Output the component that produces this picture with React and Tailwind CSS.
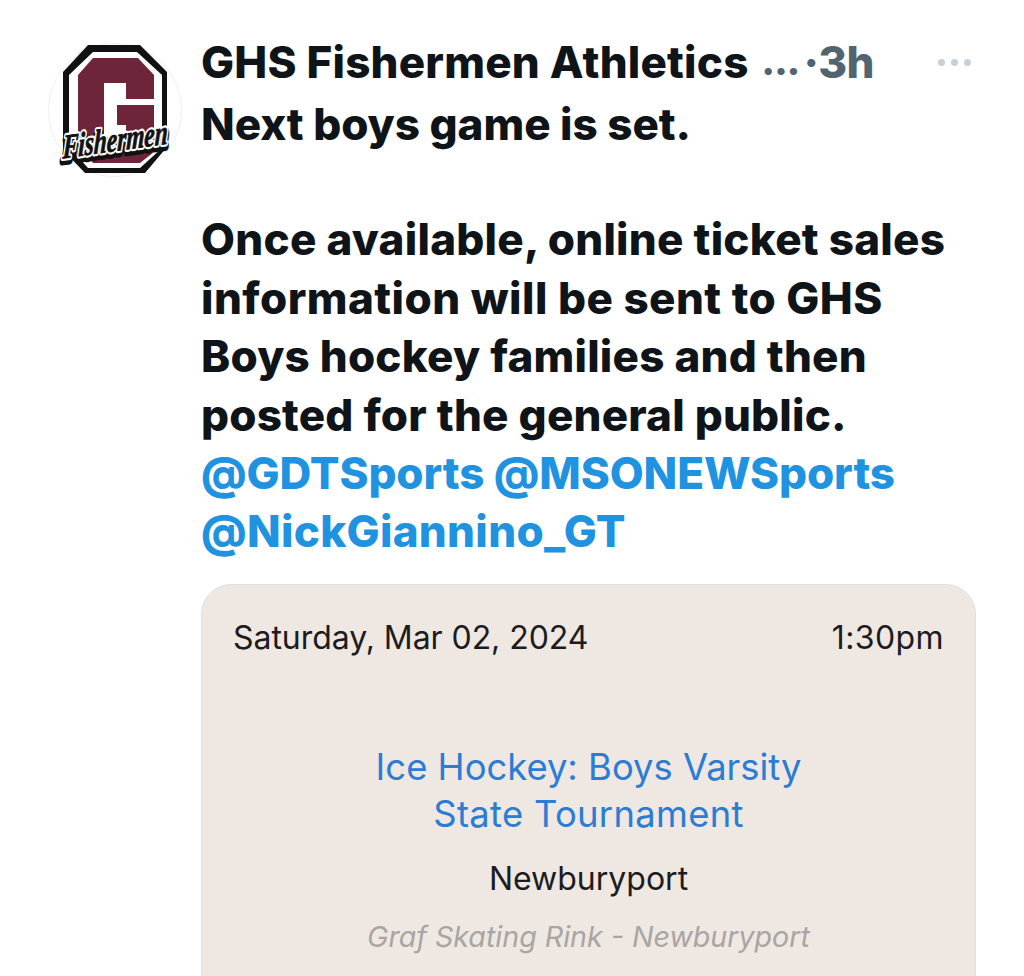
import React from 'react';

const scriptProps = {
  x: 67,
  y: 108,
  textAnchor: 'middle',
  fontFamily: "'Liberation Serif', serif",
  fontStyle: 'italic',
  fontWeight: 700,
  fontSize: 34,
  textLength: 106,
  lengthAdjust: 'spacingAndGlyphs',
  strokeLinejoin: 'round',
};

const Logo = () => (
  <svg width="134" height="134" viewBox="0 0 134 134" className="shrink-0 overflow-visible">
    <circle cx="67" cy="67" r="66.5" fill="#fff" stroke="#f0f0f0" />
    <polygon points="40,2 92,2 119,29 119,104 97,130 37,130 15,107 15,29" fill="#111" />
    <polygon points="45,9 89,9 114,32 114,105 92,125 40,125 21,104 21,32" fill="#fff" />
    <polygon points="45,15 90,15 106,32 106,109 92,120 45,120 30,105 30,32" fill="#6e2439" />
    <path d="M56 40 H78 V56 H108 V62 H69 V82 H78 V100 H56 Z" fill="#fff" />
    <g transform="rotate(-8 67 108) translate(19 0) skewX(-10)">
      <text {...scriptProps} y={111} fill="#111" stroke="#111" strokeWidth="8">Fishermen</text>
      <text {...scriptProps} fill="#fff" stroke="#fff" strokeWidth="5">Fishermen</text>
      <text {...scriptProps} fill="#111" stroke="#111" strokeWidth="0.8">Fishermen</text>
    </g>
  </svg>
);

export default function App() {
  return (
    <div className="h-[976px] w-[1024px] overflow-hidden bg-white font-['Inter',sans-serif] antialiased">
      <div className="flex gap-[20px] pl-[48px] pr-[48px] pt-[33px]">
        <div className="pt-[10px]">
          <Logo />
        </div>

        <div className="flex-1 min-w-0">
          {/* Tweet header */}
          <div className="-ml-px flex h-[58px] items-center text-[44px] font-extrabold leading-[58px] tracking-[0.2px]">
            <span className="text-[#0f1419]">GHS Fishermen Athletics</span>
            <span className="ml-[13px] text-[36px] font-black tracking-[-0.8px] text-[#536471]">...</span>
            <span className="ml-[4px] tracking-[-0.6px] text-[#536471]">·3h</span>
            <div className="ml-auto mr-[5px] flex gap-[6px]">
              <span className="h-[7px] w-[7px] rounded-full bg-[#c5d0d9]" />
              <span className="h-[7px] w-[7px] rounded-full bg-[#c5d0d9]" />
              <span className="h-[7px] w-[7px] rounded-full bg-[#c5d0d9]" />
            </div>
          </div>

          {/* Tweet body */}
          <div className="mt-[4px] -ml-px text-[44px] font-extrabold leading-[58.4px] tracking-[0.25px] text-[#0f1419]">
            <p className="tracking-[-0.05px]">Next boys game is set.</p>
            <p className="mt-[57px]">Once available, online ticket sales</p>
            <p className="tracking-[0.45px]">information will be sent to GHS</p>
            <p className="tracking-[0.2px]">Boys hockey families and then</p>
            <p className="tracking-[0.2px]">posted for the general public.</p>
            <p className="tracking-[-0.1px] text-[#1f93e0]">@GDTSports @MSONEWSports</p>
            <p className="tracking-[0.3px] text-[#1f93e0]">@NickGiannino_GT</p>
          </div>

          {/* Card */}
          <div className="mt-[23px] -ml-px h-[500px] rounded-t-[30px] border border-[#e3e0dc] bg-[#eee7e2] px-[31px] pt-[33px]">
            <div className="flex justify-between text-[32px] leading-[40px] text-[#1c1c1e]">
              <span className="tracking-[-0.05px]">Saturday, Mar 02, 2024</span>
              <span className="tracking-[0.4px]">1:30pm</span>
            </div>
            <div className="mt-[86px] text-center text-[36.4px] leading-[47px] text-[#2b7cd3]">
              <p>Ice Hockey: Boys Varsity</p>
              <p className="tracking-[0.3px]">State Tournament</p>
            </div>
            <p className="mt-[21px] text-center text-[32px] leading-[40px] text-[#1c1c1e]">Newburyport</p>
            <p className="mt-[18px] text-center text-[28.6px] italic leading-[40px] text-[#a8a5a3]">Graf Skating Rink - Newburyport</p>
          </div>
        </div>
      </div>
    </div>
  );
}
